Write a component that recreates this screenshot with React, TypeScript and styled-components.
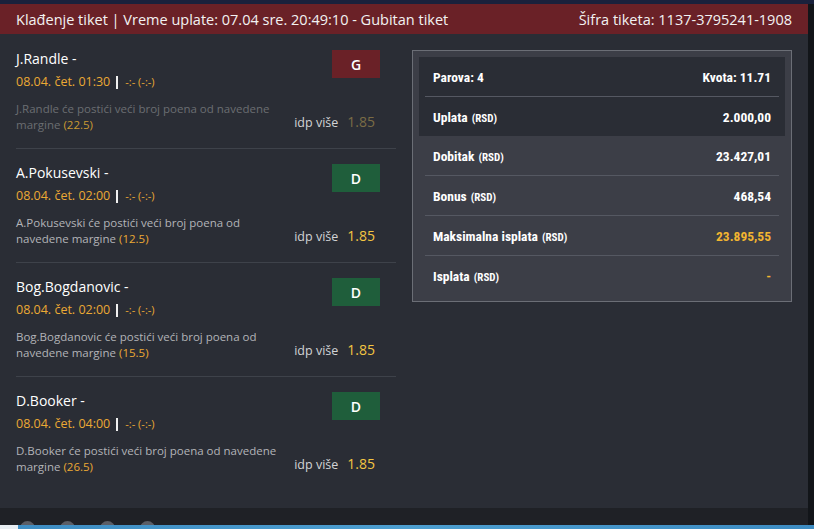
import React from "react";
import styled, { createGlobalStyle } from "styled-components";

const GlobalStyle = createGlobalStyle`
  html, body {
    margin: 0;
    padding: 0;
    background: #121519;
  }
  * { box-sizing: border-box; }
`;

const Page = styled.div`
  width: 814px;
  height: 529px;
  display: flex;
  flex-direction: column;
  overflow: hidden;
  font-family: "Open Sans", "Liberation Sans", sans-serif;
`;

const TopStrip = styled.div`
  height: 4px;
  background: #1a213c;
`;

const Main = styled.div`
  flex: 1;
  display: flex;
  min-height: 0;
`;

const Window = styled.div`
  flex: 1;
  display: flex;
  flex-direction: column;
  background: #2a2d35;
`;

const RightEdge = styled.div`
  width: 6px;
  background: #121519;
`;

const Header = styled.header`
  height: 30px;
  background: #6a2127;
  color: #f2f2f2;
  font-size: 14.5px;
  display: flex;
  align-items: center;
  justify-content: space-between;
  padding: 0 16px;
`;

const Body = styled.div`
  flex: 1;
  display: flex;
  gap: 16px;
  padding: 16px;
`;

const Bets = styled.div`
  width: 380px;
  display: flex;
  flex-direction: column;
`;

const Bet = styled.div`
  display: flex;
  padding: 15px 0;
  border-bottom: 1px solid #3e424a;
  &:first-child { padding-top: 0; }
  &:last-child { border-bottom: none; }
`;

const BetInfo = styled.div`
  width: 274px;
  display: flex;
  flex-direction: column;
`;

const Name = styled.div`
  color: #ffffff;
  font-size: 14px;
  line-height: 18px;
`;

const DateLine = styled.div`
  margin-top: 6px;
  line-height: 16px;
  color: #eba934;
  font-size: 12.5px;
  display: flex;
  align-items: center;
`;

const Bar = styled.span`
  display: inline-block;
  width: 2px;
  height: 13px;
  background: #f0f0f0;
  margin: 0 7px 0 6px;
`;

const Score = styled.span`
  font-size: 11px;
`;

const Desc = styled.div<{ $lost?: boolean }>`
  margin-top: 11px;
  font-size: 11.5px;
  line-height: 16px;
  color: ${(p) => (p.$lost ? "#6b6d72" : "#b3b4b8")};
`;

const Margin = styled.span<{ $lost?: boolean }>`
  color: ${(p) => (p.$lost ? "#c99a32" : "#eba934")};
`;

const BetSide = styled.div`
  flex: 1;
  display: flex;
  flex-direction: column;
  align-items: flex-end;
  justify-content: space-between;
  margin-right: 16px;
`;

const Badge = styled.div<{ $kind: "G" | "D" }>`
  width: 48px;
  height: 28px;
  display: flex;
  align-items: center;
  justify-content: center;
  color: #ffffff;
  font-size: 14px;
  font-weight: 600;
  background: ${(p) => (p.$kind === "G" ? "#6a2127" : "#1f5e3b")};
`;

const Odds = styled.div`
  display: flex;
  align-items: baseline;
  gap: 9px;
  padding-right: 5px;
  line-height: 20px;
  white-space: nowrap;
`;

const OddsLabel = styled.span`
  color: #d2d3d6;
  font-size: 12.5px;
`;

const OddsValue = styled.span<{ $lost?: boolean }>`
  font-size: 14px;
  color: ${(p) => (p.$lost ? "#7a6c45" : "#f4c542")};
`;

const Summary = styled.div`
  width: 380px;
  align-self: flex-start;
  border: 1px solid #6b6e76;
  background: #3c3e47;
  padding: 6px;
  font-family: "Liberation Sans Narrow", "Roboto Condensed", "Roboto", sans-serif;
`;

const Stake = styled.div`
  background: #2a2d35;
`;

const Row = styled.div`
  height: 40px;
  margin: 0 6px;
  padding: 0 8px;
  display: flex;
  align-items: center;
  justify-content: space-between;
  border-bottom: 1px solid #555862;
  color: #ffffff;
  &:last-child { border-bottom: none; height: 39px; }
`;

const Label = styled.span`
  font-size: 13.5px;
  font-weight: 700;
`;

const Unit = styled.span`
  font-size: 11px;
  font-weight: 700;
  margin-left: 4px;
`;

const Value = styled.span<{ $gold?: boolean }>`
  font-size: 13.5px;
  font-weight: 700;
  color: ${(p) => (p.$gold ? "#f2b530" : "#ffffff")};
`;

const Footer = styled.div`
  height: 17px;
  background: #1f2126;
  display: flex;
  gap: 25px;
  padding-left: 20px;
  overflow: hidden;
`;

const Dot = styled.div`
  width: 15px;
  height: 15px;
  margin-top: 13px;
  border-radius: 50%;
  background: #5b5e66;
  flex-shrink: 0;
`;

const Taskbar = styled.div`
  height: 4px;
  display: flex;
  background: linear-gradient(90deg, #3d8cc2, #4d9fd0 50%, #3d8cc2);
`;

const TaskbarStart = styled.div`
  width: 18px;
  background: #e8eef3;
`;

type Pick = {
  name: string;
  time: string;
  margin: string;
  result: "G" | "D";
};

const picks: Pick[] = [
  { name: "J.Randle", time: "08.04. čet. 01:30", margin: "22.5", result: "G" },
  { name: "A.Pokusevski", time: "08.04. čet. 02:00", margin: "12.5", result: "D" },
  { name: "Bog.Bogdanovic", time: "08.04. čet. 02:00", margin: "15.5", result: "D" },
  { name: "D.Booker", time: "08.04. čet. 04:00", margin: "26.5", result: "D" },
];

const totals = [
  { label: "Dobitak", value: "23.427,01" },
  { label: "Bonus", value: "468,54" },
  { label: "Maksimalna isplata", value: "23.895,55", gold: true },
  { label: "Isplata", value: "-", gold: true },
];

export default function App() {
  return (
    <>
      <GlobalStyle />
      <Page>
        <TopStrip />
        <Main>
          <Window>
            <Header>
              <span>Klađenje tiket | Vreme uplate: 07.04 sre. 20:49:10 - Gubitan tiket</span>
              <span>Šifra tiketa: 1137-3795241-1908</span>
            </Header>
            <Body>
              <Bets>
                {picks.map((p) => {
                  const lost = p.result === "G";
                  return (
                    <Bet key={p.name}>
                      <BetInfo>
                        <Name>{p.name} -</Name>
                        <DateLine>
                          {p.time}
                          <Bar />
                          <Score>-:- (-:-)</Score>
                        </DateLine>
                        <Desc $lost={lost}>
                          {p.name} će postići veći broj poena od navedene margine{" "}
                          <Margin $lost={lost}>({p.margin})</Margin>
                        </Desc>
                      </BetInfo>
                      <BetSide>
                        <Badge $kind={p.result}>{p.result}</Badge>
                        <Odds>
                          <OddsLabel>idp više</OddsLabel>
                          <OddsValue $lost={lost}>1.85</OddsValue>
                        </Odds>
                      </BetSide>
                    </Bet>
                  );
                })}
              </Bets>
              <Summary>
                <Stake>
                  <Row>
                    <Label>Parova: 4</Label>
                    <Value>Kvota: 11.71</Value>
                  </Row>
                  <Row>
                    <Label>
                      Uplata<Unit>(RSD)</Unit>
                    </Label>
                    <Value>2.000,00</Value>
                  </Row>
                </Stake>
                <div>
                  {totals.map((t) => (
                    <Row key={t.label}>
                      <Label>
                        {t.label}
                        <Unit>(RSD)</Unit>
                      </Label>
                      <Value $gold={t.gold}>{t.value}</Value>
                    </Row>
                  ))}
                </div>
              </Summary>
            </Body>
            <Footer>
              <Dot />
              <Dot />
              <Dot />
              <Dot />
            </Footer>
          </Window>
          <RightEdge />
        </Main>
        <Taskbar>
          <TaskbarStart />
        </Taskbar>
      </Page>
    </>
  );
}
